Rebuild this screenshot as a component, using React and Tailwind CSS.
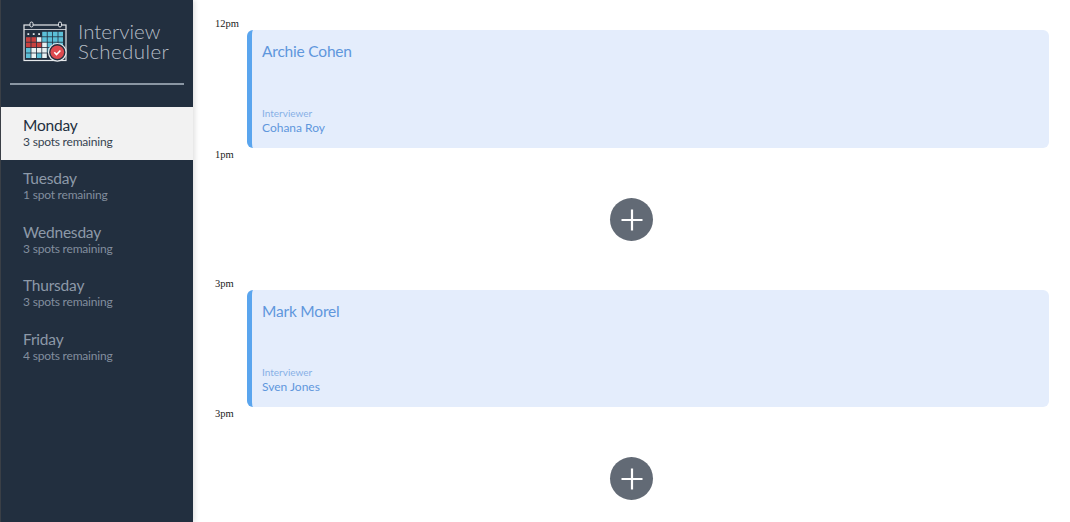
const days = [
  { name: "Monday", spots: "3 spots remaining", selected: true },
  { name: "Tuesday", spots: "1 spot remaining" },
  { name: "Wednesday", spots: "3 spots remaining" },
  { name: "Thursday", spots: "3 spots remaining" },
  { name: "Friday", spots: "4 spots remaining" },
];

// calendar cells, one string per row: . dot, r red, c cyan, w white, - empty
const calendarRows = ["...cccc", "rrwcccc", "rrrwccc", "cwwwc--", "cwcw.--"];
const cellColors = { r: "#c8403f", c: "#5cc0d8", w: "#e8f0f2" };

function Logo() {
  return (
    <svg width="46" height="42" viewBox="0 0 46 42" className="shrink-0">
      <rect x="1" y="4" width="42" height="35.5" fill="none" stroke="#e6e9ec" strokeWidth="1.2" />
      <line x1="1" y1="8.5" x2="43" y2="8.5" stroke="#e6e9ec" strokeWidth="0.8" />
      <rect x="7" y="1" width="3" height="5" rx="1.5" fill="#222f3f" stroke="#e6e9ec" strokeWidth="1" />
      <rect x="35.5" y="1" width="3" height="5" rx="1.5" fill="#222f3f" stroke="#e6e9ec" strokeWidth="1" />
      {calendarRows.map((row, y) =>
        row.split("").map((c, x) => {
          if (c === "-") return null;
          const cx = 3 + x * 5.4;
          const cy = 10.8 + y * 5.4;
          if (c === ".") return <rect key={`${x}-${y}`} x={cx + 1.4} y={cy + 1.4} width="1.8" height="1.8" fill="#dfe4e8" />;
          return <rect key={`${x}-${y}`} x={cx} y={cy} width="4.6" height="4.6" fill={cellColors[c]} />;
        })
      )}
      <circle cx="34.3" cy="31.3" r="8.8" fill="#222f3f" stroke="#e6e9ec" strokeWidth="1.2" />
      <circle cx="34.3" cy="31.3" r="6.8" fill="#dd4a4f" />
      <path d="M31.3 31.3 L33.5 33.5 L37.4 29.5" fill="none" stroke="#fff" strokeWidth="1.6" />
    </svg>
  );
}

function DayItem({ name, spots, selected }) {
  return (
    <li className={`h-[53.4px] pl-[22px] pt-[9px] ${selected ? "bg-[#f2f2f2] text-[#222f3e]" : "text-[#8d99a8]"}`}>
      <h2 className="text-[15.5px] leading-[18px] tracking-[-0.2px]">{name}</h2>
      <p className="text-[12px] leading-[15px] tracking-[-0.2px] opacity-90">{spots}</p>
    </li>
  );
}

function TimeLabel({ time }) {
  return (
    <div className="h-[12px] pl-[22px] text-[10.5px] leading-[11px] text-[#222] [font-family:'Liberation_Serif',serif]">
      {time}
    </div>
  );
}

function Booking({ name, interviewer, height }) {
  return (
    <div className={`ml-[54px] mr-[21px] flex flex-col justify-between rounded-md border-l-[5px] border-[#5aa5ee] bg-[#e4edfc] pb-[13px] pl-[10px] pt-[11px] text-[#5f97dc] ${height}`}>
      <h2 className="text-[15.5px] leading-[20px] tracking-[-0.2px]">{name}</h2>
      <div>
        <p className="text-[10px] leading-[14px] opacity-70">Interviewer</p>
        <p className="text-[12px] leading-[15px]">{interviewer}</p>
      </div>
    </div>
  );
}

function AddButton({ height }) {
  return (
    <div className={`flex items-center justify-center ${height}`}>
      <button className="flex h-[43px] w-[43px] items-center justify-center rounded-full bg-[#626a75]">
        <svg width="24" height="24" viewBox="0 0 24 24">
          <path d="M12 1.5V22.5M1.5 12H22.5" stroke="#fff" strokeWidth="2.2" />
        </svg>
      </button>
    </div>
  );
}

export default function App() {
  return (
    <div className="flex h-[522px] w-[1070px] overflow-hidden bg-white [font-family:'Lato',sans-serif]">
      <aside className="z-10 w-[193px] shrink-0 border-l border-[#3a3f46] bg-[#222f3f] shadow-[2px_0_5px_rgba(0,0,0,0.12)]">
        <div className="ml-[9px] mr-[9px] flex h-[85px] items-start border-b-2 border-[#8a96a3] pl-[13px] pt-[21px]">
          <Logo />
          <div className="ml-[9px] text-[20.5px] font-light text-[#b6bdc6]">
            <div className="h-[20px] leading-[20px]">Interview</div>
            <div className="h-[20px] leading-[20px] tracking-[0.4px]">Scheduler</div>
          </div>
        </div>
        <ul className="mt-[22px]">
          {days.map((d) => (
            <DayItem key={d.name} {...d} />
          ))}
        </ul>
      </aside>
      <main className="flex-1 pt-[18px]">
        <TimeLabel time="12pm" />
        <Booking name="Archie Cohen" interviewer="Cohana Roy" height="h-[118px]" />
        <div className="h-[1px]" />
        <TimeLabel time="1pm" />
        <AddButton height="h-[117px]" />
        <TimeLabel time="3pm" />
        <Booking name="Mark Morel" interviewer="Sven Jones" height="h-[117px]" />
        <div className="h-[1px]" />
        <TimeLabel time="3pm" />
        <AddButton height="h-[117px]" />
      </main>
    </div>
  );
}
